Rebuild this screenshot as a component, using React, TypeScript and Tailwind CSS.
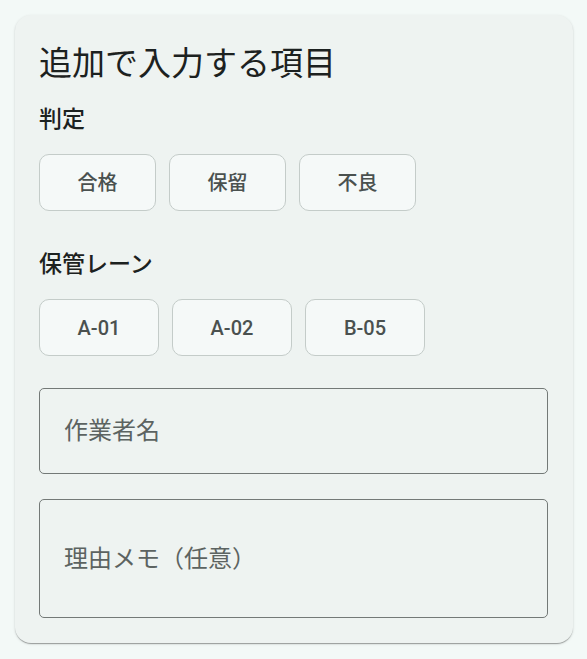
import React from "react";

const font = { fontFamily: 'Roboto, "Noto Sans CJK JP", sans-serif' };

function Chip({ label, w }: { label: string; w: string }) {
  return (
    <button
      type="button"
      className={`h-[57px] ${w} rounded-[10px] border border-[#c4ccc9] bg-[#f5f9f8] text-[20px] font-medium text-[#4a514f] flex items-center justify-center`}
    >
      {label}
    </button>
  );
}

export default function App() {
  return (
    <div className="min-h-[659px] w-[587px] bg-[#f3f9f7] pt-[15px] pl-[15px]" style={font}>
      <div className="w-[558px] rounded-[16px] bg-[#eef3f1] px-[24px] pb-[25px] pt-[25px] shadow-[0_2px_1px_-1px_rgba(0,0,0,0.2),0_1px_1px_0_rgba(0,0,0,0.14),0_1px_3px_0_rgba(0,0,0,0.12)]">
        <h2 className="text-[33px] leading-[48px] font-normal text-[#1c2120]">追加で入力する項目</h2>
        <div className="mt-[14px] text-[23px] leading-[36px] font-medium text-[#1c2120]">判定</div>
        <div className="mt-[16px] flex gap-[13px]">
          <Chip label="合格" w="w-[117px]" />
          <Chip label="保留" w="w-[117px]" />
          <Chip label="不良" w="w-[117px]" />
        </div>
        <div className="mt-[36px] text-[23px] leading-[36px] font-medium text-[#1c2120]">保管レーン</div>
        <div className="mt-[16px] flex gap-[13px]">
          <Chip label="A-01" w="w-[120px]" />
          <Chip label="A-02" w="w-[120px]" />
          <Chip label="B-05" w="w-[120px]" />
        </div>
        <div className="mt-[32px] flex h-[86px] w-[509px] items-center rounded-[5px] border border-[#737977] px-[24px]">
          <span className="text-[24px] text-[#5c6361]">作業者名</span>
        </div>
        <div className="mt-[25px] flex h-[119px] w-[509px] items-center rounded-[5px] border border-[#737977] px-[24px]">
          <span className="text-[24px] text-[#5c6361]">理由メモ（任意）</span>
        </div>
      </div>
    </div>
  );
}
